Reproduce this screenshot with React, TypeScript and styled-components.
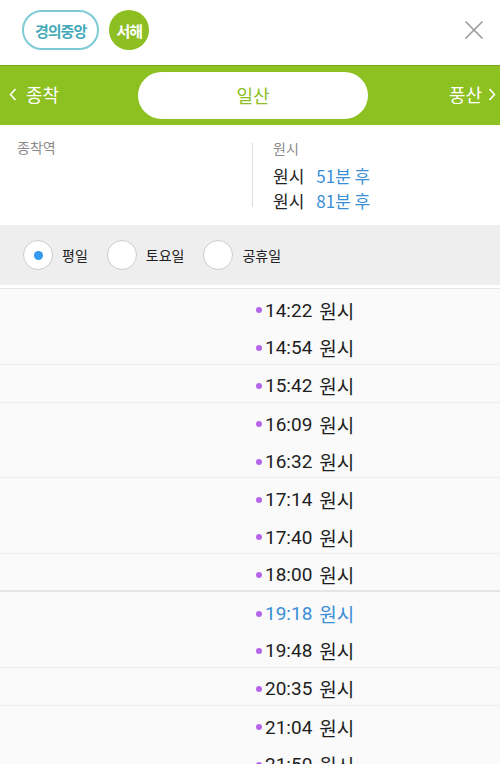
import React from 'react';
import styled, { createGlobalStyle } from 'styled-components';

const GlobalStyle = createGlobalStyle`
  html, body {
    margin: 0;
    padding: 0;
    background: #ffffff;
  }
  body {
    font-family: Roboto, 'Noto Sans CJK KR', sans-serif;
  }
  * {
    box-sizing: border-box;
  }
`;

const Page = styled.div`
  width: 500px;
  height: 764px;
  overflow: hidden;
  background: #fafafa;
`;

const TopBar = styled.div`
  height: 65px;
  background: #ffffff;
  display: flex;
  align-items: flex-start;
  padding: 10px 16px 0 22px;
  gap: 10px;
`;

const LinePill = styled.div`
  height: 40px;
  padding: 0 11px;
  border: 2px solid #7ecbd6;
  border-radius: 20px;
  display: flex;
  align-items: center;
  color: #46a9b9;
  font-family: 'Noto Sans CJK KR', sans-serif;
  font-weight: 700;
  font-size: 15px;
  letter-spacing: -1px;
`;

const LineCircle = styled.div`
  width: 40px;
  height: 40px;
  border-radius: 50%;
  background: #8dbf22;
  color: #ffffff;
  display: flex;
  align-items: center;
  justify-content: center;
  font-family: 'Noto Sans CJK KR', sans-serif;
  font-weight: 700;
  font-size: 15px;
  letter-spacing: -1px;
`;

const CloseButton = styled.button`
  margin: 10px 0 0 auto;
  border: none;
  background: none;
  padding: 0;
  width: 20px;
  height: 20px;
  display: flex;
  cursor: pointer;
`;

const StationBar = styled.div`
  height: 60px;
  background: #8dc021;
  border-top: 1px solid #79a81b;
  display: grid;
  grid-template-columns: 138px 230px 1fr;
  align-items: center;
  font-family: 'Noto Sans CJK KR', sans-serif;
  font-size: 18px;
  color: #ffffff;
`;

const SideStation = styled.div<{ $right?: boolean }>`
  display: flex;
  align-items: center;
  gap: ${(p) => (p.$right ? '6px' : '9px')};
  justify-content: ${(p) => (p.$right ? 'flex-end' : 'flex-start')};
  padding: ${(p) => (p.$right ? '0 4px 3px 0' : '0 0 3px 9px')};
`;

const CurrentStation = styled.div`
  height: 47px;
  border-radius: 24px;
  background: #ffffff;
  color: #8dbf22;
  display: flex;
  align-items: center;
  justify-content: center;
  padding-bottom: 2px;
`;

const InfoSection = styled.div`
  height: 100px;
  background: #ffffff;
  display: grid;
  grid-template-columns: 252px 1fr;
  padding-top: 12px;
  font-family: 'Noto Sans CJK KR', sans-serif;
`;

const InfoLeft = styled.div`
  padding-left: 17px;
  font-size: 14px;
  color: #8a8a8a;
`;

const InfoRight = styled.div`
  border-left: 1px solid #dddddd;
  height: 64px;
  margin-top: 6px;
  padding-left: 20px;
  display: flex;
  flex-direction: column;
`;

const InfoTitle = styled.div`
  font-size: 14px;
  color: #8a8a8a;
  margin-top: -5px;
  margin-bottom: 5px;
`;

const ArrivalRow = styled.div`
  display: flex;
  gap: 12px;
  font-size: 17px;
  line-height: 25px;
  color: #222222;
`;

const ArrivalTime = styled.span`
  color: #3a8fd6;
`;

const DayBar = styled.div`
  height: 63px;
  background: #eeeeee;
  display: flex;
  align-items: center;
  padding-left: 23px;
  font-family: 'Noto Sans CJK KR', sans-serif;
  font-size: 14px;
  color: #222222;
  border-bottom: 3px solid #ffffff;
`;

const DayOption = styled.label`
  display: flex;
  align-items: center;
  gap: 9px;
  margin-right: 19px;
`;

const Radio = styled.span<{ $checked?: boolean }>`
  width: 30px;
  height: 30px;
  border-radius: 50%;
  background: #ffffff;
  border: 1px solid #cccccc;
  display: flex;
  align-items: center;
  justify-content: center;
  &::after {
    content: '';
    width: 9px;
    height: 9px;
    border-radius: 50%;
    background: ${(p) => (p.$checked ? '#3399ee' : 'transparent')};
  }
`;

const List = styled.div`
  border-top: 1px solid #e6e6e6;
`;

const HourGroup = styled.div<{ $thick?: boolean }>`
  & > div:last-child {
    border-bottom: ${(p) => (p.$thick ? '2px solid #e6e6e6' : '1px solid #eeeeee')};
  }
`;

const Row = styled.div`
  height: 37.9px;
  padding-top: 5px;
  display: grid;
  grid-template-columns: 250px 1fr;
  align-items: center;
`;

const TimeCell = styled.div<{ $active?: boolean }>`
  grid-column: 2;
  padding-left: 6px;
  display: flex;
  align-items: center;
  gap: 2px;
  font-size: 19px;
  color: ${(p) => (p.$active ? '#3a8fd6' : '#1e1e1e')};
  &::before {
    content: '';
    width: 6px;
    height: 6px;
    border-radius: 50%;
    background: #b565e8;
    margin-right: 1px;
  }
`;

const Dest = styled.span`
  font-family: 'Noto Sans CJK KR', sans-serif;
  margin-left: 5px;
`;

const Chevron = ({ dir }: { dir: 'left' | 'right' }) => (
  <svg width="8" height="13" viewBox="0 0 8 13" fill="none" stroke="#ffffff" strokeWidth="1.6">
    {dir === 'left' ? <path d="M6.5 1 L1.5 6.5 L6.5 12" /> : <path d="M1.5 1 L6.5 6.5 L1.5 12" />}
  </svg>
);

const groups: { times: string[]; thick?: boolean }[] = [
  { times: ['14:22', '14:54'] },
  { times: ['15:42'] },
  { times: ['16:09', '16:32'] },
  { times: ['17:14', '17:40'] },
  { times: ['18:00'], thick: true },
  { times: ['19:18', '19:48'] },
  { times: ['20:35'] },
  { times: ['21:04', '21:50'] },
];

export default function App() {
  return (
    <>
      <GlobalStyle />
      <Page>
        <TopBar>
          <LinePill>경의중앙</LinePill>
          <LineCircle>서해</LineCircle>
          <CloseButton aria-label="닫기">
            <svg width="20" height="20" viewBox="0 0 20 20" stroke="#9a9a9a" strokeWidth="1.6">
              <path d="M1.5 1.5 L18.5 18.5 M18.5 1.5 L1.5 18.5" />
            </svg>
          </CloseButton>
        </TopBar>

        <StationBar>
          <SideStation>
            <Chevron dir="left" />
            종착
          </SideStation>
          <CurrentStation>일산</CurrentStation>
          <SideStation $right>
            풍산
            <Chevron dir="right" />
          </SideStation>
        </StationBar>

        <InfoSection>
          <InfoLeft>종착역</InfoLeft>
          <InfoRight>
            <InfoTitle>원시</InfoTitle>
            <ArrivalRow>
              원시 <ArrivalTime>51분 후</ArrivalTime>
            </ArrivalRow>
            <ArrivalRow>
              원시 <ArrivalTime>81분 후</ArrivalTime>
            </ArrivalRow>
          </InfoRight>
        </InfoSection>

        <DayBar>
          <DayOption>
            <Radio $checked />
            평일
          </DayOption>
          <DayOption>
            <Radio />
            토요일
          </DayOption>
          <DayOption>
            <Radio />
            공휴일
          </DayOption>
        </DayBar>

        <List>
          {groups.map((g) => (
            <HourGroup key={g.times[0]} $thick={g.thick}>
              {g.times.map((t) => (
                <Row key={t}>
                  <TimeCell $active={t === '19:18'}>
                    {t}
                    <Dest>원시</Dest>
                  </TimeCell>
                </Row>
              ))}
            </HourGroup>
          ))}
        </List>
      </Page>
    </>
  );
}
